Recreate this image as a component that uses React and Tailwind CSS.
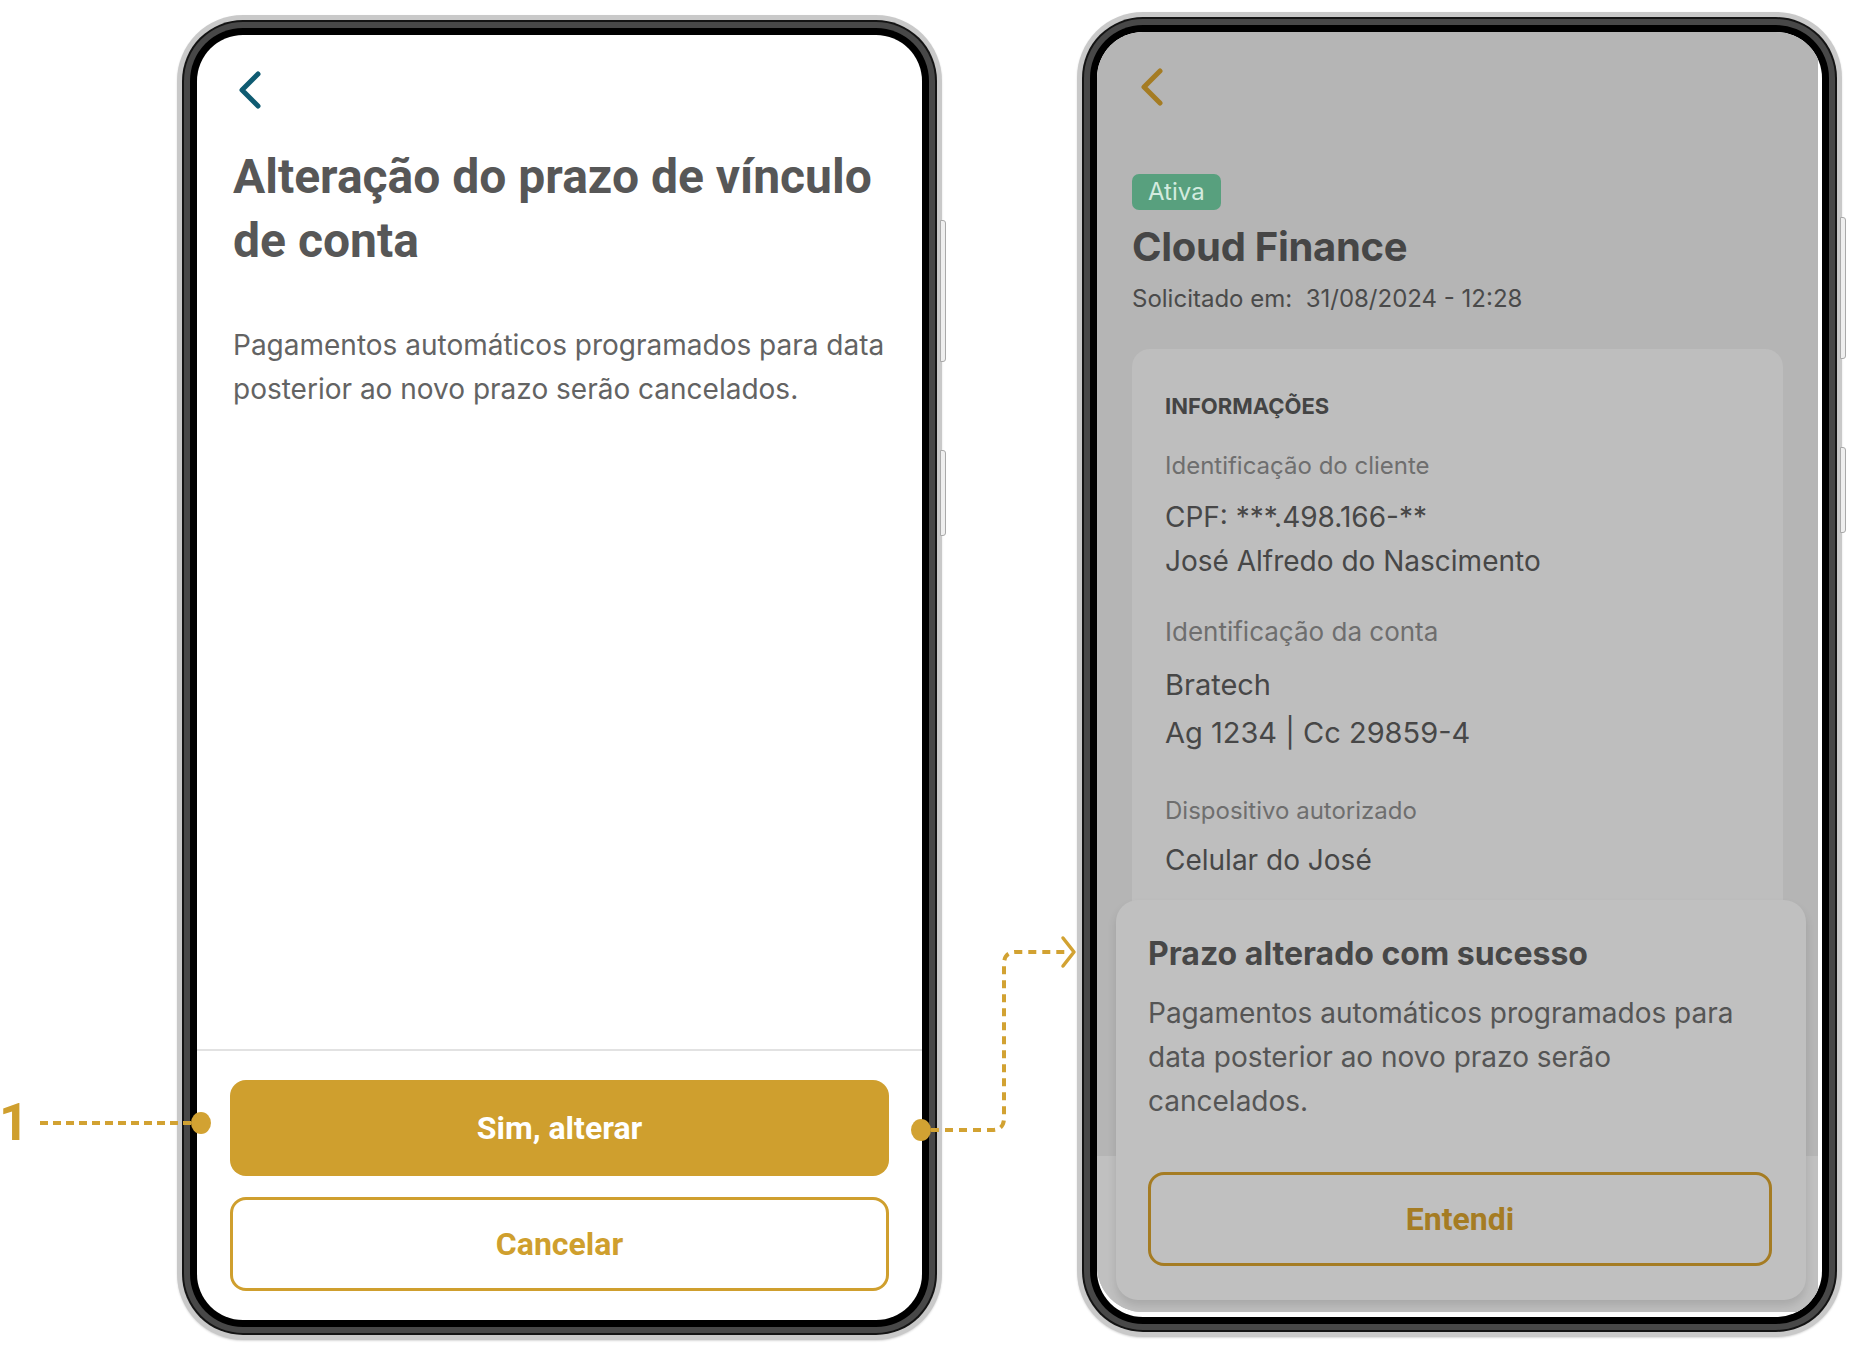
import React from "react";

const inter = "font-['Inter','Liberation_Sans',sans-serif]";
const roboto = "font-['Roboto','Liberation_Sans',sans-serif]";

function Chevron({ color }) {
  return (
    <svg width="24" height="38" viewBox="0 0 24 38" fill="none">
      <polyline points="20,3 4,19 20,35" stroke={color} strokeWidth="5" strokeLinecap="round" strokeLinejoin="round" />
    </svg>
  );
}

function Phone({ children, className = "" }) {
  return (
    <div className={`relative w-[765px] h-[1325px] shrink-0 rounded-[66px] bg-[#c9c9c9] p-[5px] shadow-[0_1px_2px_rgba(0,0,0,0.15)] ${className}`}>
      <div className="absolute right-[-4px] top-[205px] h-[142px] w-[6px] rounded-r-[3px] border border-[#a9a9a9] bg-[#efefef]" />
      <div className="absolute right-[-4px] top-[435px] h-[86px] w-[6px] rounded-r-[3px] border border-[#a9a9a9] bg-[#efefef]" />
      <div className="h-full rounded-[61px] bg-[#141414] p-[2px]">
        <div className="h-full rounded-[59px] bg-[#484848] p-[6px]">
          <div className="h-full rounded-[53px] bg-black p-[7px]">
            <div className="h-full rounded-[46px] overflow-hidden bg-white relative">{children}</div>
          </div>
        </div>
      </div>
    </div>
  );
}

function ConfirmScreen() {
  return (
    <div className="flex h-full flex-col">
      <div className="pl-[36px] pr-[28px]">
        <div className="pt-[36px] pl-[5px]">
          <Chevron color="#0f5b72" />
        </div>
        <h1 className={`${roboto} mt-[36px] text-[48px] leading-[64px] font-bold text-[#575757]`}>
          Alteração do prazo de vínculo de conta
        </h1>
        <p className={`${inter} mt-[50px] text-[28px] leading-[44px] text-[#636363]`}>
          Pagamentos automáticos programados para data posterior ao novo prazo serão cancelados.
        </p>
      </div>
      <div className="flex-1" />
      <div className="border-t-2 border-[#e2e2e2] px-[33px] pt-[29px] pb-[29px] flex flex-col gap-[21px]">
        <button className={`${roboto} h-[96px] rounded-[16px] bg-[#cf9f2e] text-[32px] font-bold text-white`}>
          Sim, alterar
        </button>
        <button className={`${roboto} h-[94px] rounded-[16px] border-[3px] border-[#cf9f2e] bg-white text-[32px] font-bold text-[#cf9f2e]`}>
          Cancelar
        </button>
      </div>
    </div>
  );
}

function InfoGroup({ label, labelSize, children }) {
  return (
    <div>
      <div className={`${labelSize} text-[#6e6e6e]`}>{label}</div>
      {children}
    </div>
  );
}

function SuccessScreen() {
  return (
    <div className="h-full pr-[4px] pb-[5px] bg-white">
      <div className="flex h-full flex-col bg-[#b5b5b5] rounded-bl-[46px]">
        <div className="px-[35px]">
          <div className="pt-[36px] pl-[8px]">
            <Chevron color="#a57c23" />
          </div>
          <span className={`${inter} mt-[68px] inline-block rounded-[7px] bg-[#58a07e] px-[16px] text-[24px] leading-[36px] text-[#d3ebdf]`}>
            Ativa
          </span>
          <h2 className={`${inter} mt-[13px] text-[40px] leading-[48px] font-bold text-[#464646] tracking-[-0.3px]`}>
            Cloud Finance
          </h2>
          <p className={`${inter} mt-[10px] text-[24px] leading-[36px] text-[#4a4a4a]`}>
            Solicitado em:&nbsp; 31/08/2024 - 12:28
          </p>
          <div className={`${inter} mt-[32px] rounded-t-[18px] bg-[#bebebe] px-[33px] pt-[43px] h-[807px]`}>
            <div className="text-[22px] leading-[28px] font-bold text-[#444]">INFORMAÇÕES</div>
            <div className="mt-[30px]">
              <InfoGroup label="Identificação do cliente" labelSize="text-[24px] leading-[32px]">
                <div className="mt-[13px] text-[28px] leading-[44px] text-[#474747]">
                  CPF: ***.498.166-**
                  <br />
                  José Alfredo do Nascimento
                </div>
              </InfoGroup>
            </div>
            <div className="mt-[33px]">
              <InfoGroup label="Identificação da conta" labelSize="text-[26px] leading-[32px]">
                <div className="mt-[13px] text-[29px] leading-[48px] text-[#474747]">
                  Bratech
                  <br />
                  Ag 1234 | Cc 29859-4
                </div>
              </InfoGroup>
            </div>
            <div className="mt-[40px]">
              <InfoGroup label="Dispositivo autorizado" labelSize="text-[24px] leading-[28px]">
                <div className="mt-[13px] text-[28px] leading-[44px] text-[#474747]">Celular do José</div>
              </InfoGroup>
            </div>
          </div>
        </div>
        <div className="flex-1 bg-[#c0c0c0] rounded-bl-[46px]" />
      </div>

      <div className={`${inter} absolute left-[19px] right-[16px] top-[868px] h-[400px] rounded-[22px] bg-[#c0c0c0] pl-[32px] pr-[34px] pt-[34px] shadow-[0_6px_10px_rgba(0,0,0,0.12)]`}>
        <h3 className="text-[32px] leading-[40px] font-bold text-[#474747]">Prazo alterado com sucesso</h3>
        <p className="mt-[17px] text-[28px] leading-[44px] text-[#555]">
          Pagamentos automáticos programados para data posterior ao novo prazo serão cancelados.
        </p>
        <button className={`${roboto} mt-[49px] h-[94px] w-full rounded-[16px] border-[3px] border-[#a57c23] text-[32px] font-bold text-[#a57c23]`}>
          Entendi
        </button>
      </div>
    </div>
  );
}

function Annotations() {
  const gold = "#d2a232";
  return (
    <div className="pointer-events-none absolute inset-0">
      <div className={`${roboto} absolute left-[-1px] top-[1097px] text-[52px] leading-[52px] font-bold text-[#cf9f2e]`}>1</div>
      <svg className="absolute left-0 top-0" width="1852" height="1356" viewBox="0 0 1852 1356" fill="none">
        <line x1="40" y1="1123" x2="192" y2="1123" stroke={gold} strokeWidth="4" strokeDasharray="8 5" />
        <ellipse cx="201" cy="1123" rx="10" ry="11" fill={gold} />
        <ellipse cx="921" cy="1130" rx="10" ry="11" fill={gold} />
        <path d="M931 1130 H992 Q1004 1130 1004 1118 V964 Q1004 952 1016 952 H1070" stroke={gold} strokeWidth="4" strokeDasharray="8 6" />
        <polyline points="1063,938 1074,952 1063,966" stroke={gold} strokeWidth="3.5" strokeLinecap="round" strokeLinejoin="round" />
      </svg>
    </div>
  );
}

export default function App() {
  return (
    <div className="relative w-[1852px] h-[1356px] overflow-hidden bg-white">
      <div className="flex items-start">
        <Phone className="ml-[177px] mt-[15px]">
          <ConfirmScreen />
        </Phone>
        <Phone className="ml-[135px] mt-[12px]">
          <SuccessScreen />
        </Phone>
      </div>
      <Annotations />
    </div>
  );
}
